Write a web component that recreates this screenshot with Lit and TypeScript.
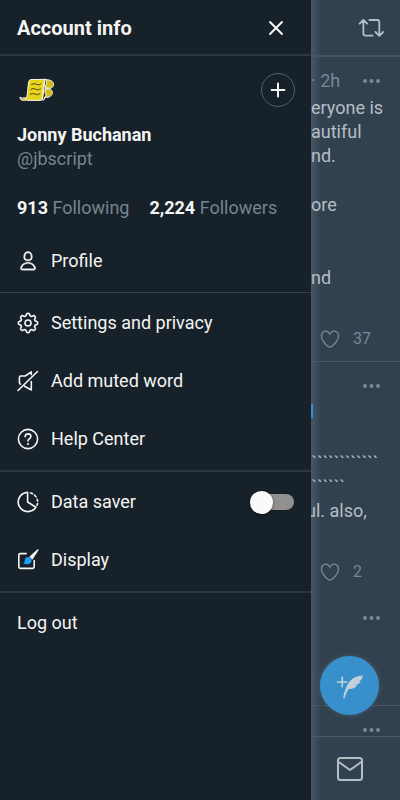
import { LitElement, html, svg, css } from "lit";
import { customElement, property } from "lit/decorators.js";

/** Outline of an eight-toothed cog centred on 11,11. */
const cogOutline = (): string => {
  const steps = 128;
  const points: string[] = [];
  for (let i = 0; i < steps; i++) {
    const a = (i / steps) * Math.PI * 2;
    const r = 8.5 + 1.15 * Math.tanh(2 * Math.cos(8 * a));
    points.push(`${(11 + r * Math.cos(a)).toFixed(2)} ${(11 + r * Math.sin(a)).toFixed(2)}`);
  }
  return `M${points.join("L")}Z`;
};

const icons = {
  profile: svg`<g transform="scale(.9167)" fill="currentColor" stroke-width=".4"><path d="M12 11.816c1.355 0 2.872-.15 3.84-1.256.814-.93 1.078-2.368.806-4.392-.38-2.825-2.117-4.512-4.646-4.512S7.734 3.343 7.354 6.17c-.272 2.022-.008 3.46.806 4.39.968 1.107 2.485 1.256 3.84 1.256zM8.84 6.368c.162-1.2.787-3.212 3.16-3.212s2.998 2.013 3.16 3.212c.207 1.55.057 2.627-.45 3.205-.455.52-1.266.743-2.71.743s-2.255-.223-2.71-.743c-.507-.578-.657-1.656-.45-3.205zm11.44 12.868c-.877-3.526-4.282-5.99-8.28-5.99s-7.403 2.464-8.28 5.99c-.172.692-.028 1.4.395 1.94.408.52 1.04.82 1.733.82h12.304c.693 0 1.325-.3 1.733-.82.424-.54.567-1.247.394-1.94zm-1.576 1.016c-.126.16-.316.246-.552.246H5.848c-.235 0-.426-.085-.552-.246-.137-.174-.18-.412-.12-.654.71-2.855 3.517-4.85 6.824-4.85s6.114 1.994 6.824 4.85c.06.242.017.48-.12.654z"/></g>`,
  settings: svg`<path d=${cogOutline()}/><circle cx="11" cy="11" r="3"/>`,
  mute: svg`<path d="M1 20.5L20.5 1.5M14.3 4.6V1.8L8.2 6H3.8Q2.4 6 2.4 7.4V12.6Q2.4 13.6 3.4 14.2M14.3 11.5V20L7.6 16.2"/>`,
  help: svg`<circle cx="11" cy="11" r="9.6"/><path d="M8.2 8.7C8.2 6.9 9.4 5.9 11 5.9S13.9 6.9 13.9 8.5C13.9 10.6 11 10.8 11 13"/><circle cx="11" cy="16" r="1.1" fill="currentColor" stroke="none"/>`,
  data: svg`<path d="M10.6 1.4A9.6 9.6 0 1 0 18.9 16.2L10.6 11Z"/><path d="M13.6 1.9L15.6 2.7M17.6 4.2L19 5.8M20.2 8.2L20.6 10.2M20.5 12.5L20 14.2"/>`,
  display: svg`<path d="M9.2 4.6H3.4Q1.8 4.6 1.8 6.2V17.8Q1.8 19.4 3.4 19.4H15.6Q17.2 19.4 17.2 17.8V11.5"/><path d="M21 .8L13.2 7.6L15.2 9.8Z" fill="currentColor" stroke-width="1.2"/><path d="M12.3 8.2C9.6 7.2 7.8 9.3 7.7 11.4C7.6 13 7 14 6.2 14.8C9.6 15.9 13.8 15 14.5 12.4C14.8 10.8 13.9 9.2 12.3 8.2Z" fill="#1da1f2" stroke="none"/>`,
};

const closeIcon = html`<svg width="16" height="16" viewBox="0 0 16 16" aria-hidden="true"><path d="M2 2L14 14M14 2L2 14"/></svg>`;
const plusIcon = html`<svg width="16" height="16" viewBox="0 0 16 16" aria-hidden="true"><path d="M8 1.6V14.4M1.6 8H14.4"/></svg>`;

const avatar = html`<svg width="36" height="22" viewBox="0 0 36 22" role="img" aria-label="Jonny Buchanan">
  <path d="M20 .8H27C34.6 .8 35.6 8 30.4 9.2H20ZM20 9.8H28C34.6 10 33.6 18.4 26.5 18.4H20Z" fill="#d3bd13"/>
  <path d="M25 .6L22.4 21H24L25.1 17.5L26 17V14.5L25 14V9.8H27.4V8.8H25.6V6L26.6 5V1Z" fill="#3f3d17"/>
  <path d="M10.5 .6C8.6 .6 8.4 4 8 8C7.5 13 7.2 17 6.4 19.2Q5.8 21.4 7.5 21.4H21.2C22.6 20 22.6 14 23.4 8C23.8 4 24 1.8 25.2 .6Z" fill="#e8d41b"/>
  <path d="M0 18.6Q2.8 19.6 5.3 18.7L6.2 21.2H2Q.6 21.2 0 18.6Z" fill="#d0bb12"/>
  <path d="M11.5 5.5Q14 3.7 16.5 5.3T21 5M10.8 10.4Q13 8.6 15.6 10.2T20.4 10M10.2 15.3Q12.4 13.5 15 15.1T20 14.6" fill="none" stroke="#504916" stroke-width="1"/>
</svg>`;

const base = css`
  * { box-sizing: border-box; }
  button { appearance: none; margin: 0; padding: 0; border: 0; background: none; color: inherit; font: inherit; cursor: pointer; }
  a { color: inherit; text-decoration: none; }
  svg { display: block; flex: none; fill: none; stroke: currentColor; stroke-linecap: round; stroke-linejoin: round; overflow: visible; }
  p, h1, h2 { margin: 0; font: inherit; }
`;

@customElement("account-drawer")
class AccountDrawer extends LitElement {
  static styles = [base, css`
    :host { display: block; background: #17212a; color: #f5f5f3; font-size: 18px; line-height: 24px; }
    .head { display: flex; align-items: center; justify-content: space-between; height: 56px; padding: 1px 27px 0 17px; border-bottom: 2px solid #2b3640; }
    .title { font-size: 20px; font-weight: 700; }
    .close { stroke-width: 2; }
    .account { padding: 17px 16px 12px 17px; }
    .top { display: flex; justify-content: space-between; align-items: center; height: 34px; }
    .portrait { display: block; padding: 0 0 0 3px; }
    .add { display: grid; place-items: center; width: 34px; height: 34px; border: 1px solid #52616d; border-radius: 50%; stroke-width: 2; }
    .name { margin-top: 16px; font-weight: 700; }
    .muted { color: #76848f; }
    .stats { display: flex; gap: 20px; margin-top: 25px; }
    .stats b { color: #f5f5f3; }
    .group { padding: 1px 0 2px; border-top: 2px solid #2b3640; }
    .group.light { border-top: 1px solid #36414b; }
    .group.first { border-top: 0; padding-top: 0; }
    .row { display: flex; align-items: center; gap: 12px; width: 100%; height: 58px; padding: 0 17px; text-align: left; cursor: pointer; }
    .row svg { stroke-width: 1.6; }
    .label { flex: 1; }
    .switch { appearance: none; display: flex; align-items: center; width: 44px; height: 24px; margin: 0; cursor: pointer; }
    .switch::before { content: ""; position: relative; z-index: 1; width: 23px; height: 23px; border-radius: 50%; background: #fafafa; box-shadow: 0 1px 3px #0007; }
    .switch::after { content: ""; flex: 1; height: 16px; margin-left: -14px; border-radius: 0 8px 8px 0; background: #928f8f; }
    .switch:checked { transform: scaleX(-1); }
  `];

  private link(icon: keyof typeof icons, label: string) {
    return html`<a class="row" href="#">${this.icon(icon)}<span class="label">${label}</span></a>`;
  }

  private icon(name: keyof typeof icons) {
    return html`<svg width="22" height="22" viewBox="0 0 22 22" aria-hidden="true">${icons[name]}</svg>`;
  }

  render() {
    return html`
      <header class="head">
        <h1 class="title">Account info</h1>
        <button class="close" aria-label="Close">${closeIcon}</button>
      </header>
      <section class="account">
        <div class="top">
          <a class="portrait" href="#">${avatar}</a>
          <button class="add" aria-label="Add account">${plusIcon}</button>
        </div>
        <p class="name">Jonny Buchanan</p>
        <p class="muted">@jbscript</p>
        <div class="stats">
          <a class="muted" href="#"><b>913</b> Following</a>
          <a class="muted" href="#"><b>2,224</b> Followers</a>
        </div>
      </section>
      <nav>
        <div class="group first">${this.link("profile", "Profile")}</div>
        <div class="group light">
          ${this.link("settings", "Settings and privacy")}
          ${this.link("mute", "Add muted word")}
          ${this.link("help", "Help Center")}
        </div>
        <div class="group">
          <label class="row">
            ${this.icon("data")}<span class="label">Data saver</span>
            <input class="switch" type="checkbox" role="switch" />
          </label>
          ${this.link("display", "Display")}
        </div>
        <div class="group"><button class="row">Log out</button></div>
      </nav>
    `;
  }
}

@customElement("tweet-item")
class TweetItem extends LitElement {
  @property() time = "";
  @property() likes = "";

  static styles = [base, css`
    :host { display: block; padding-top: 12px; }
    .meta { display: flex; align-items: center; height: 24px; margin-bottom: 3px; padding-right: 20px; color: #788896; }
    .more { margin-left: auto; }
    .more svg { fill: currentColor; stroke: none; }
    .like { display: flex; align-items: center; gap: 12px; margin: 37px 0 0 8px; height: 24px; color: #788896; font-size: 16px; }
    .like svg { fill: currentColor; stroke: none; }
  `];

  render() {
    return html`
      <div class="meta">
        <span>${this.time}</span>
        <button class="more" aria-label="More">
          <svg width="17" height="4" viewBox="0 0 17 4" aria-hidden="true"><circle cx="2" cy="2" r="2"/><circle cx="8.5" cy="2" r="2"/><circle cx="15" cy="2" r="2"/></svg>
        </button>
      </div>
      <slot></slot>
      ${this.likes
        ? html`<button class="like" aria-label="Like">
            <svg width="22" height="22" viewBox="0 0 24 24" aria-hidden="true"><path d="M12 21.638h-.014C9.403 21.59 1.95 14.856 1.95 8.478c0-3.064 2.525-5.754 5.403-5.754 2.29 0 3.83 1.58 4.646 2.73.814-1.148 2.354-2.73 4.645-2.73 2.88 0 5.404 2.69 5.404 5.755 0 6.376-7.454 13.11-10.037 13.157H12zM7.354 4.225c-2.08 0-3.903 1.988-3.903 4.255 0 5.74 7.034 11.596 8.55 11.658 1.518-.062 8.55-5.917 8.55-11.658 0-2.267-1.823-4.255-3.903-4.255-2.528 0-3.94 2.936-3.952 2.965-.23.562-1.156.562-1.387 0-.014-.03-1.425-2.965-3.954-2.965z"/></svg>
            <span>${this.likes}</span>
          </button>`
        : null}
    `;
  }
}

@customElement("app-root")
class AppRoot extends LitElement {
  static styles = [base, css`
    :host { display: grid; grid-template-columns: minmax(0, 1fr) 89px; min-height: 100vh; font-family: Roboto, "Liberation Sans", sans-serif; }
    .behind { position: relative; display: flex; flex-direction: column; overflow: hidden; background: linear-gradient(90deg, #475766, #32414f 10px); color: #b6bec5; font-size: 18px; line-height: 24px; }
    .bar { display: flex; align-items: center; justify-content: flex-end; height: 57px; padding-right: 16px; border-bottom: 2px solid #425362; stroke-width: 1.8; }
    .feed { flex: 1; }
    .divided { border-bottom: 1px solid #455665; }
    .end { padding-bottom: 10px; }
    .text { margin-bottom: 25px; white-space: nowrap; }
    .cut { margin-left: -5px; }
    .mark { width: 2px; height: 14px; margin: 6px 0 33px; background: #3b8ec9; }
    .quiet { height: 112px; }
    .peek { height: 30px; }
    .tabs { display: flex; align-items: center; justify-content: center; height: 64px; padding-right: 11px; border-top: 1px solid #4b5c6b; stroke-width: 2; }
    .compose { position: absolute; right: 21px; bottom: 85px; display: grid; place-items: center; width: 59px; height: 59px; border-radius: 50%; background: #3790cb; color: #c3d0da; box-shadow: 0 0 5px #6b849966; }
  `];

  render() {
    return html`
      <account-drawer></account-drawer>
      <main class="behind">
        <header class="bar">
          <button aria-label="Switch timeline">
            <svg width="26" height="20" viewBox="0 0 26 20" aria-hidden="true"><path d="M1.6 5.6L5.4 2L9.2 5.6M5.4 2.4V15.6Q5.4 17.6 7.4 17.6H14.6M11.4 2H19.3Q21.3 2 21.3 4V17.4M17.5 14L21.3 17.8L25.1 14"/></svg>
          </button>
        </header>
        <div class="feed">
          <tweet-item class="divided end" time="· 2h" likes="37">
            <p class="text">eryone is<br />autiful<br />nd.</p>
            <p class="text">ore</p>
            <p class="text"><br />nd</p>
          </tweet-item>
          <tweet-item class="end" likes="2">
            <div class="mark"></div>
            <p class="text cut">${"`".repeat(13)}<br />${"`".repeat(7)}<br />ul. also,</p>
          </tweet-item>
          <tweet-item class="divided quiet"></tweet-item>
          <tweet-item class="peek"></tweet-item>
        </div>
        <nav class="tabs">
          <a href="#" aria-label="Messages">
            <svg width="28" height="26" viewBox="0 0 28 26" aria-hidden="true"><rect x="2" y="2" width="24" height="22" rx="2.5"/><path d="M2.6 6L14 14L25.4 6"/></svg>
          </a>
        </nav>
        <button class="compose" aria-label="New Tweet">
          <svg width="28" height="26" viewBox="0 0 28 26" aria-hidden="true">
            <path d="M6.2 4.4V13.6M1.6 9H10.8" stroke-width="1.7"/>
            <path d="M26.8 2.4C20 2.6 14.6 6 11.6 11.4C9.2 16 7.6 20.6 7.3 25.2L8.5 25.4C9.4 22 10.8 18.8 12.8 16C16.2 16.2 19.4 14.8 21.2 12.4L17.8 12.2C20.6 12 23.4 10.8 24.9 8.4L22.8 8.3C25.4 7 26.7 5 26.8 2.4Z" fill="currentColor" stroke="none"/>
          </svg>
        </button>
      </main>
    `;
  }
}
